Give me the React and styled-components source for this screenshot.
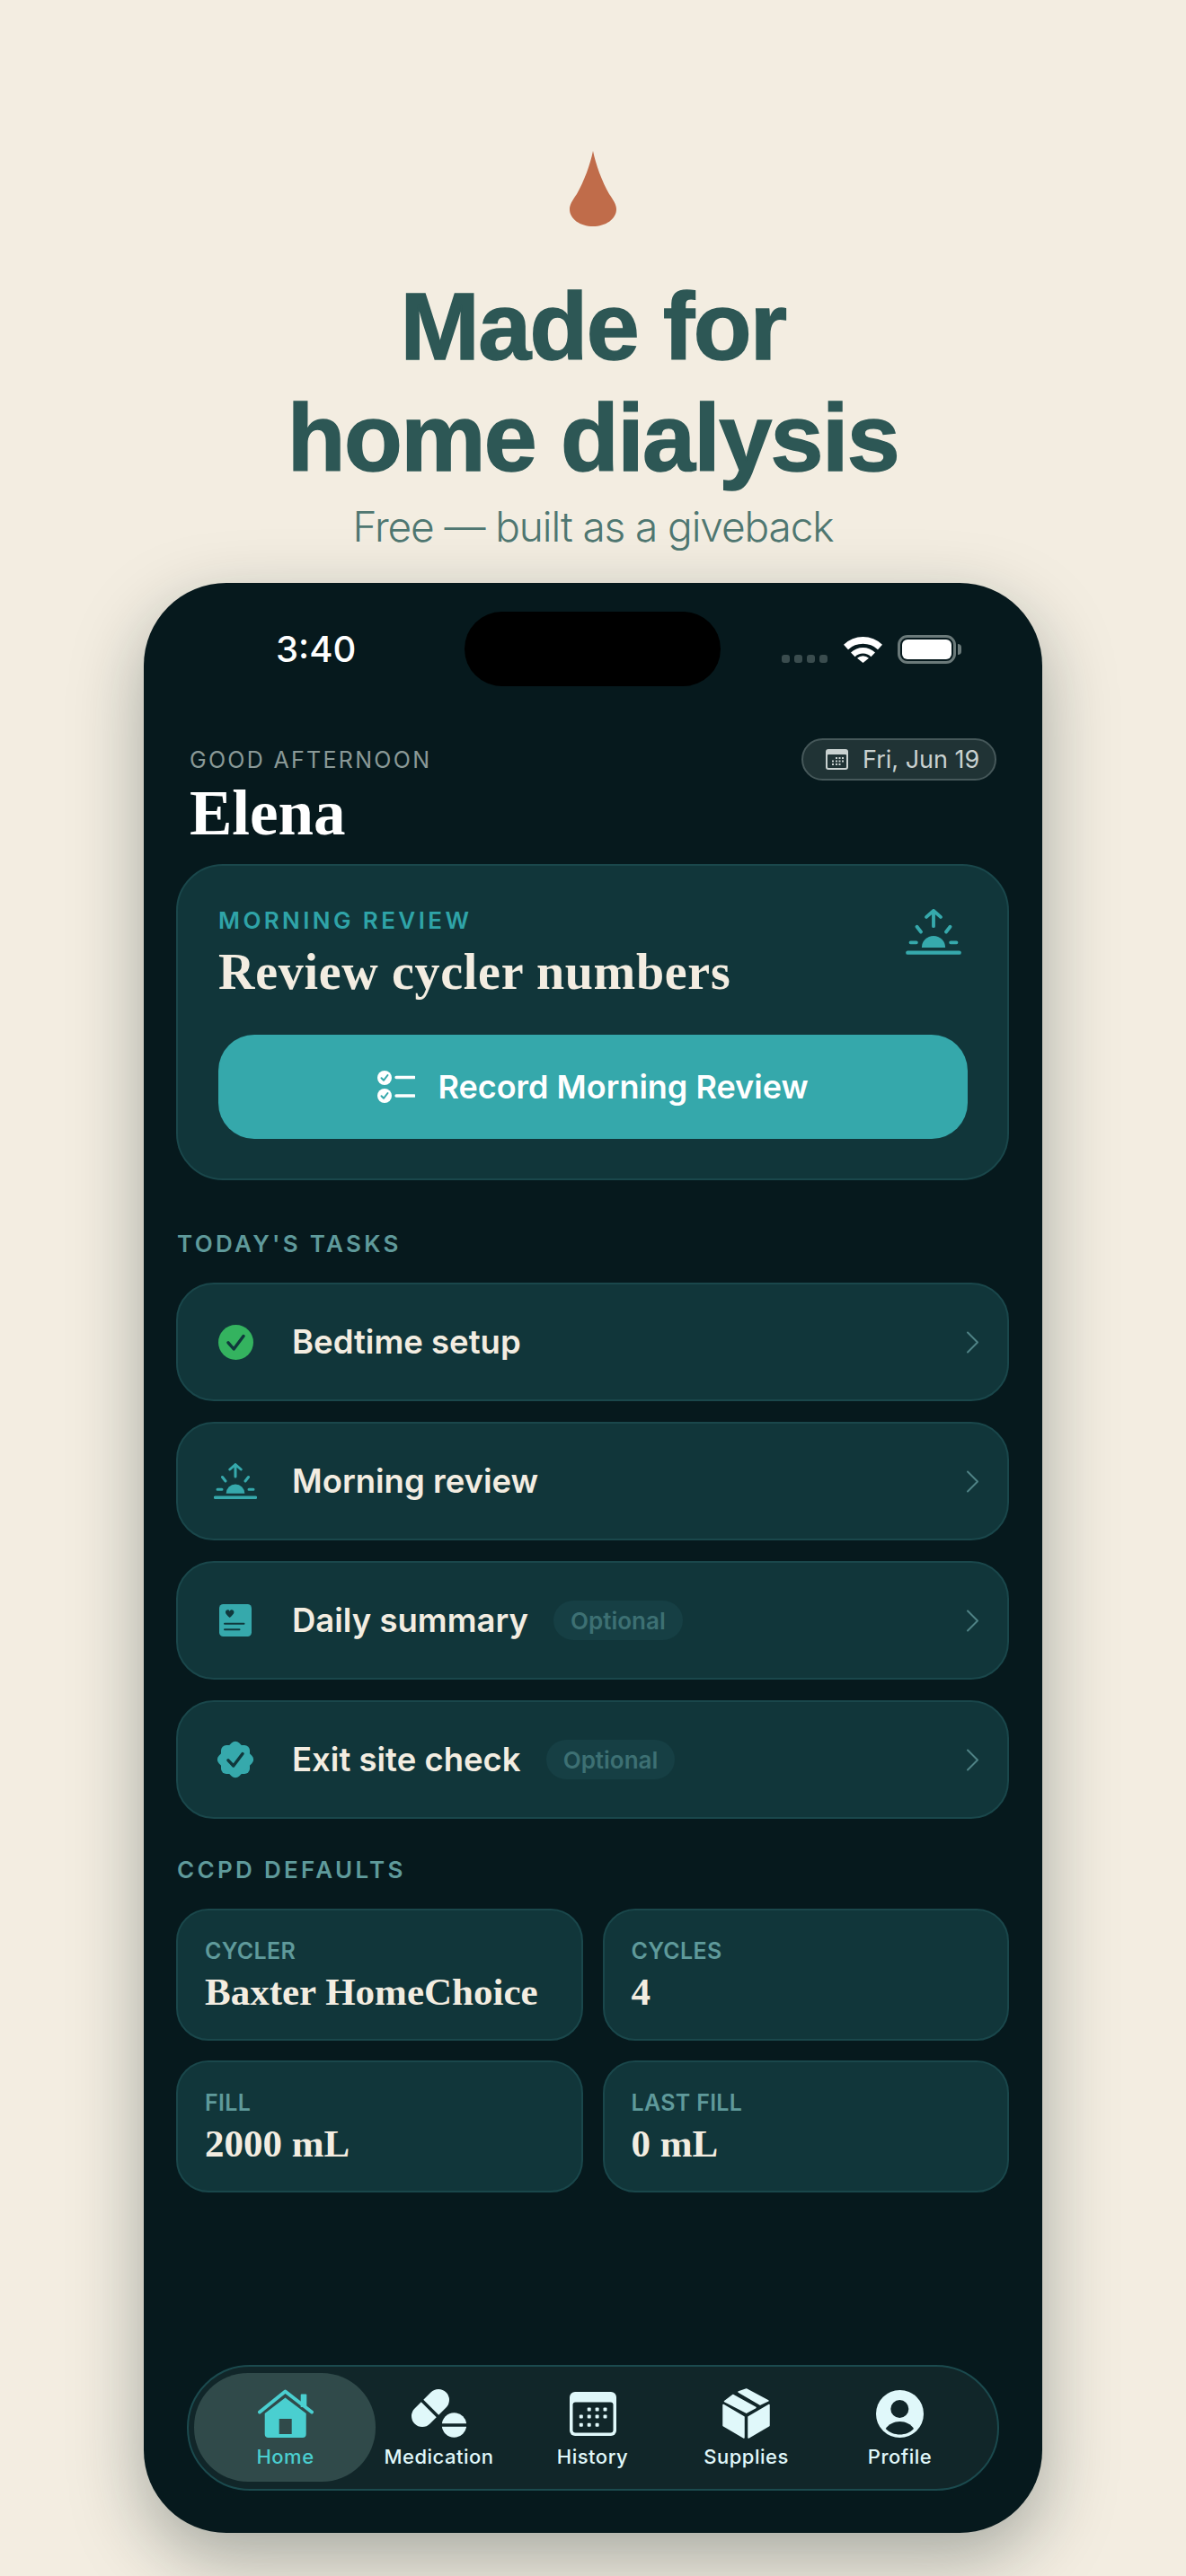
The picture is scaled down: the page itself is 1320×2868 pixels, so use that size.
import React from 'react';
import styled, { createGlobalStyle } from 'styled-components';

const GlobalStyle = createGlobalStyle`
  * { box-sizing: border-box; }
  html, body { margin: 0; padding: 0; background: #f3ede1; }
  body { font-family: Inter, "Liberation Sans", sans-serif; }
`;

const serif = `"Liberation Serif", "Times New Roman", serif`;

const Page = styled.div`
  width: 1320px;
  height: 2868px;
  overflow: hidden;
  display: flex;
  flex-direction: column;
  align-items: center;
  padding-top: 168px;
  background: #f3ede1;
`;

const Hero = styled.header`
  display: flex;
  flex-direction: column;
  align-items: center;
  text-align: center;
`;

const Headline = styled.h1`
  margin: 49px 0 0;
  font-family: "Liberation Sans", Arial, sans-serif;
  font-size: 106px;
  line-height: 124px;
  font-weight: 700;
  letter-spacing: -1.6px;
  -webkit-text-stroke: 1.5px #2d5755;
  color: #2d5755;
`;

const Subtitle = styled.p`
  margin: 6px 0 0;
  font-size: 46px;
  line-height: 62px;
  font-weight: 300;
  letter-spacing: -1.1px;
  color: #4f7771;
`;

const Phone = styled.main`
  width: 1000px;
  height: 2171px;
  margin-top: 32px;
  display: flex;
  flex-direction: column;
  flex-shrink: 0;
  border-radius: 92px;
  background: #06191d;
  box-shadow: 0 28px 80px rgba(16, 36, 34, 0.34);
`;

const StatusBar = styled.div`
  display: grid;
  grid-template-columns: 210px 285px 1fr;
  align-items: center;
  height: 83px;
  margin-top: 32px;
  padding-left: 147px;
`;

const Clock = styled.span`
  font-size: 40px;
  font-weight: 500;
  color: #fff;
`;

const Island = styled.div`
  height: 83px;
  border-radius: 42px;
  background: #000;
`;

const StatusIcons = styled.div`
  display: flex;
  align-items: center;
  padding-left: 68px;
`;

const SignalDots = styled.div`
  display: flex;
  gap: 5px;
  margin: 22px 18px 0 0;
`;

const SignalDot = styled.i`
  width: 9px;
  height: 9px;
  border-radius: 3px;
  background: #3a4c4e;
`;

const Battery = styled.div`
  position: relative;
  width: 65px;
  height: 32px;
  margin-left: 17px;
  padding: 2px;
  border: 3px solid #6b7a7a;
  border-radius: 11px;
  &::after {
    content: '';
    position: absolute;
    right: -9px;
    top: 7px;
    width: 4px;
    height: 12px;
    border-radius: 0 4px 4px 0;
    background: #6b7a7a;
  }
`;

const BatteryFill = styled.div`
  height: 100%;
  border-radius: 6px;
  background: #fff;
`;

const Header = styled.div`
  margin-top: 58px;
  padding: 0 51px;
`;

const GreetingRow = styled.div`
  display: flex;
  align-items: center;
  justify-content: space-between;
`;

const Greeting = styled.span`
  font-size: 25px;
  letter-spacing: 2.3px;
  color: #8a9997;
`;

const DatePill = styled.div`
  width: 217px;
  height: 47px;
  display: flex;
  align-items: center;
  gap: 16px;
  padding-left: 25px;
  border: 2px solid #46585a;
  border-radius: 24px;
  background: #203335;
  font-size: 27px;
  color: #c9d1d0;
`;

const Name = styled.h2`
  margin: -5px 0 5px;
  font-family: ${serif};
  font-size: 71px;
  line-height: 82px;
  font-weight: 700;
  color: #fff;
`;

const Content = styled.div`
  padding: 11px 37px 0 36px;
`;

const Card = styled.section`
  border: 2px solid #1a474b;
  background: #11363a;
`;

const ReviewCard = styled(Card)`
  height: 352px;
  padding: 46px 45px 0;
  border-radius: 52px;
`;

const ReviewTop = styled.div`
  display: flex;
  justify-content: space-between;
`;

const ReviewLabel = styled.div`
  font-size: 26px;
  line-height: 30px;
  font-weight: 600;
  letter-spacing: 3.4px;
  color: #2fa4a8;
`;

const ReviewTitle = styled.h3`
  margin: 11px 0 0;
  font-family: ${serif};
  font-size: 56px;
  line-height: 62px;
  font-weight: 700;
  letter-spacing: 0.7px;
  color: #f3ede1;
`;

const SunriseSlot = styled.div`
  margin: 2px 6px 0 0;
  line-height: 0;
`;

const RecordButton = styled.button`
  width: 834px;
  height: 116px;
  margin-top: 39px;
  display: flex;
  align-items: center;
  justify-content: center;
  gap: 25px;
  border: 0;
  border-radius: 40px;
  background: #35a8ab;
  font-family: inherit;
  font-size: 36px;
  font-weight: 600;
  color: #fff;
`;

const SectionTitle = styled.h4`
  margin: ${(p) => p.$top}px 0 27px 1px;
  font-size: 26px;
  line-height: 32px;
  font-weight: 600;
  letter-spacing: 3.3px;
  color: #5f9a9b;
`;

const TaskList = styled.div`
  display: flex;
  flex-direction: column;
  gap: 23px;
`;

const TaskRow = styled(Card)`
  height: 132px;
  display: flex;
  align-items: center;
  padding: 0 31px 0 40px;
  border-radius: 42px;
`;

const TaskIcon = styled.div`
  width: 48px;
  margin-right: 39px;
  display: flex;
  justify-content: center;
  line-height: 0;
`;

const TaskName = styled.span`
  font-size: 36.5px;
  font-weight: 600;
  color: #f3ede1;
`;

const OptionalBadge = styled.span`
  height: 44px;
  display: flex;
  align-items: center;
  margin-left: 28px;
  padding: 0 19px;
  border-radius: 22px;
  background: #163f44;
  font-size: 26px;
  font-weight: 600;
  color: #3d7073;
`;

const Chevron = styled.svg`
  margin-left: auto;
`;

const DefaultsGrid = styled.div`
  display: grid;
  grid-template-columns: 1fr 1fr;
  gap: 22px;
`;

const DefaultCard = styled(Card)`
  height: 147px;
  padding: 29px 30px 0;
  border-radius: 36px;
`;

const DefaultLabel = styled.div`
  font-size: 25px;
  line-height: 32px;
  font-weight: 600;
  letter-spacing: 0.3px;
  color: #5f9a9b;
`;

const DefaultValue = styled.div`
  margin-top: 5px;
  font-family: ${serif};
  font-size: 43px;
  line-height: 50px;
  font-weight: 700;
  color: #f3ede1;
`;

const NavBar = styled.nav`
  width: 904px;
  height: 140px;
  margin: auto 0 47px 48px;
  display: grid;
  grid-template-columns: repeat(5, 171px);
  padding-left: 22px;
  border: 2px solid #1b4a4e;
  border-radius: 70px;
  background: #112629;
`;

const NavItem = styled.div`
  position: relative;
  display: flex;
  flex-direction: column;
  align-items: center;
  padding-top: 24px;
  font-size: 22px;
  font-weight: 500;
  letter-spacing: 0.5px;
  color: ${(p) => (p.$active ? '#4acfd0' : '#e0f8fa')};
  &::before {
    content: ${(p) => (p.$active ? "''" : 'none')};
    position: absolute;
    left: -16px;
    top: 7px;
    width: 202px;
    height: 121px;
    border-radius: 60px;
    background: #304a4a;
  }
`;

const NavIconSlot = styled.div`
  position: relative;
  height: 56px;
  display: flex;
  align-items: center;
  justify-content: center;
`;

const NavLabel = styled.span`
  position: relative;
  margin-top: 4px;
  line-height: 32px;
`;

const TEAL = '#36a9ac';
const DARK = '#10383c';
const ICE = '#e0f8fa';

const Drop = () => (
  <svg width="52" height="84" viewBox="0 0 52 84">
    <path
      d="M26 0 C29 15 36 34 44 48 C49 55 52 60 52 65 C52 76 40 84 26 84 C12 84 0 76 0 65 C0 60 3 55 8 48 C16 34 23 15 26 0Z"
      fill="#c06c4a"
    />
  </svg>
);

const Wifi = () => (
  <svg width="43" height="31" viewBox="0 0 43 31" fill="#fff">
    <path d="M0 10.7 A31 31 0 0 1 43 10.7 L38 16.2 A24 24 0 0 0 5 16.2Z" />
    <path d="M8 19.6 A19 19 0 0 1 35 19.6 L30.4 24.2 A12.5 12.5 0 0 0 12.6 24.2Z" />
    <path d="M15 25.8 A9.5 9.5 0 0 1 28 25.8 L21.5 31Z" />
  </svg>
);

const CalendarSmall = () => (
  <svg width="25" height="23" viewBox="0 0 25 23">
    <rect width="25" height="23" rx="3" fill="#c9d1d0" />
    <rect x="2" y="6" width="21" height="15" rx="1" fill="#203335" />
    {[[11, 9], [14.5, 9], [18, 9], [7, 12.5], [11, 12.5], [14.5, 12.5], [18, 12.5], [7, 16], [11, 16], [14.5, 16]].map(([x, y]) => (
      <rect key={`${x}-${y}`} x={x} y={y} width="2" height="2" fill="#c9d1d0" />
    ))}
  </svg>
);

const Sunrise = ({ width = 48, height = 40 }) => (
  <svg width={width} height={height} viewBox="0 0 48 40" fill="none" stroke={TEAL} strokeWidth="3" strokeLinecap="round">
    <path d="M24 15V2M17.8 7 24 1.5 30.2 7" strokeLinejoin="round" />
    <path d="M9.5 15.5 13 20M38.5 15.5 35 20M4 29.3H9M39 29.3H44" />
    <path d="M13.7 33.8A10.3 10.3 0 0 1 34.3 33.8Z" fill={TEAL} stroke="none" />
    <path d="M1.5 38.2H46.5" strokeWidth="3.4" />
  </svg>
);

const Checklist = () => (
  <svg width="42" height="36" viewBox="0 0 42 36">
    <circle cx="8" cy="8" r="8" fill="#fff" />
    <circle cx="8" cy="28" r="8" fill="#fff" />
    <path d="M4.5 8.2 7 10.8 11.5 5M4.5 28.2 7 30.8 11.5 25" fill="none" stroke={TEAL} strokeWidth="2" strokeLinecap="round" strokeLinejoin="round" />
    <path d="M21 7.5H41M21 28H41" stroke="#fff" strokeWidth="3.4" strokeLinecap="round" />
  </svg>
);

const DoneCheck = () => (
  <svg width="39" height="39" viewBox="0 0 39 39">
    <circle cx="19.5" cy="19.5" r="19.5" fill="#34b35f" />
    <path d="M11 19.8 17.2 27 28 12.5" fill="none" stroke={DARK} strokeWidth="3.4" strokeLinecap="round" strokeLinejoin="round" />
  </svg>
);

const SummaryIcon = () => (
  <svg width="36" height="36" viewBox="0 0 36 36">
    <rect width="36" height="36" rx="4.5" fill={TEAL} />
    <path d="M11.7 15 C8 12 7 10.5 7 8.8 C7 6.2 10.4 5.4 11.7 7.8 C13 5.4 16.4 6.2 16.4 8.8 C16.4 10.5 15.4 12 11.7 15Z" fill={DARK} />
    <path d="M6 21.7H27.5M6 28.3H22.5" stroke={DARK} strokeWidth="2" strokeLinecap="round" />
  </svg>
);

const ExitBadge = () => (
  <svg width="44" height="44" viewBox="0 0 44 44">
    <rect x="6" y="6" width="32" height="32" rx="6" fill={TEAL} />
    <rect x="6" y="6" width="32" height="32" rx="6" fill={TEAL} transform="rotate(45 22 22)" />
    <path d="M14 22.8 19.8 29 30 15.5" fill="none" stroke={DARK} strokeWidth="3.4" strokeLinecap="round" strokeLinejoin="round" />
  </svg>
);

const ChevronRight = () => (
  <Chevron width="15" height="25" viewBox="0 0 15 25" fill="none" stroke="#4f8285" strokeWidth="2" strokeLinecap="round" strokeLinejoin="round">
    <path d="M2 1.5 13 12.5 2 23.5" />
  </Chevron>
);

const HomeIcon = () => (
  <svg width="62" height="54" viewBox="0 0 62 54">
    <path d="M47.7 6.5 A1 1 0 0 1 48.7 5.5H53.3A1 1 0 0 1 54.3 6.5V20H47.7Z" fill="#4acfd0" />
    <path d="M2 25.5 30.5 2.5 60 25.5" fill="none" stroke="#4acfd0" strokeWidth="4" strokeLinecap="round" strokeLinejoin="round" />
    <path
      fillRule="evenodd"
      d="M7.7 27 30.5 9.5 53.7 27V50A4 4 0 0 1 49.7 54H11.7A4 4 0 0 1 7.7 50ZM23.7 33V50H37.7V33Z"
      fill="#4acfd0"
    />
  </svg>
);

const MedicationIcon = () => (
  <svg width="61" height="54" viewBox="0 0 61 54">
    <path d="M12 30 30 12" stroke={ICE} strokeWidth="24" strokeLinecap="round" />
    <path d="M11 12 32 33" stroke="#112629" strokeWidth="3.5" />
    <circle cx="47.5" cy="40" r="13.7" fill={ICE} />
    <path d="M32 40H62" stroke="#112629" strokeWidth="3.5" />
  </svg>
);

const HistoryIcon = () => (
  <svg width="52" height="49" viewBox="0 0 52 49">
    <rect width="52" height="49" rx="6" fill={ICE} />
    <rect x="3.5" y="11.5" width="45" height="34" rx="3" fill="#112629" />
    {[[30.6, 19.4], [39.5, 19.4], [21.7, 19.4], [12.8, 27.6], [21.7, 27.6], [30.6, 27.6], [39.5, 27.6], [12.8, 36.7], [21.7, 36.7], [30.6, 36.7]].map(([x, y]) => (
      <rect key={`${x}-${y}`} x={x - 2} y={y - 2} width="4" height="4" rx="1" fill={ICE} />
    ))}
  </svg>
);

const SuppliesIcon = () => (
  <svg width="53" height="56" viewBox="0 0 53 56" fill={ICE} stroke={ICE} strokeWidth="1.5" strokeLinejoin="round">
    <path d="M1 18.5 24 32V55L1 41.5Z" />
    <path d="M52 18.5 29 32V55L52 41.5Z" />
    <path d="M2.5 14.5 11.7 7.5 37 21.5 26.7 27.2Z" />
    <path d="M18 4 26.7 1 51 13.8 42 18.2Z" />
  </svg>
);

const ProfileIcon = () => (
  <svg width="53" height="53" viewBox="0 0 53 53">
    <circle cx="26.5" cy="26.5" r="26.5" fill={ICE} />
    <circle cx="26.3" cy="21" r="10" fill="#112629" />
    <path d="M10.7 43C14 38 20 35 26.5 35C33 35 39 38 42 43C38 47.5 32 49.5 26.5 49.5C21 49.5 15 47.5 10.7 43Z" fill="#112629" />
  </svg>
);

const tasks = [
  { name: 'Bedtime setup', icon: <DoneCheck /> },
  { name: 'Morning review', icon: <Sunrise /> },
  { name: 'Daily summary', icon: <SummaryIcon />, optional: true },
  { name: 'Exit site check', icon: <ExitBadge />, optional: true },
];

const defaults = [
  { label: 'CYCLER', value: 'Baxter HomeChoice' },
  { label: 'CYCLES', value: '4' },
  { label: 'FILL', value: '2000 mL' },
  { label: 'LAST FILL', value: '0 mL' },
];

const navItems = [
  { label: 'Home', icon: <HomeIcon />, active: true },
  { label: 'Medication', icon: <MedicationIcon /> },
  { label: 'History', icon: <HistoryIcon /> },
  { label: 'Supplies', icon: <SuppliesIcon /> },
  { label: 'Profile', icon: <ProfileIcon /> },
];

export default function App() {
  return (
    <Page>
      <GlobalStyle />
      <Hero>
        <Drop />
        <Headline>
          Made for
          <br />
          home dialysis
        </Headline>
        <Subtitle>Free — built as a giveback</Subtitle>
      </Hero>
      <Phone>
        <StatusBar>
          <Clock>3:40</Clock>
          <Island />
          <StatusIcons>
            <SignalDots>
              <SignalDot />
              <SignalDot />
              <SignalDot />
              <SignalDot />
            </SignalDots>
            <Wifi />
            <Battery>
              <BatteryFill />
            </Battery>
          </StatusIcons>
        </StatusBar>
        <Header>
          <GreetingRow>
            <Greeting>GOOD AFTERNOON</Greeting>
            <DatePill>
              <CalendarSmall />
              Fri, Jun 19
            </DatePill>
          </GreetingRow>
          <Name>Elena</Name>
        </Header>
        <Content>
          <ReviewCard>
            <ReviewTop>
              <div>
                <ReviewLabel>MORNING REVIEW</ReviewLabel>
                <ReviewTitle>Review cycler numbers</ReviewTitle>
              </div>
              <SunriseSlot>
                <Sunrise width={62} height={51} />
              </SunriseSlot>
            </ReviewTop>
            <RecordButton>
              <Checklist />
              Record Morning Review
            </RecordButton>
          </ReviewCard>
          <SectionTitle $top={55}>TODAY'S TASKS</SectionTitle>
          <TaskList>
            {tasks.map((t) => (
              <TaskRow key={t.name}>
                <TaskIcon>{t.icon}</TaskIcon>
                <TaskName>{t.name}</TaskName>
                {t.optional && <OptionalBadge>Optional</OptionalBadge>}
                <ChevronRight />
              </TaskRow>
            ))}
          </TaskList>
          <SectionTitle $top={41}>CCPD DEFAULTS</SectionTitle>
          <DefaultsGrid>
            {defaults.map((d) => (
              <DefaultCard key={d.label}>
                <DefaultLabel>{d.label}</DefaultLabel>
                <DefaultValue>{d.value}</DefaultValue>
              </DefaultCard>
            ))}
          </DefaultsGrid>
        </Content>
        <NavBar>
          {navItems.map((n) => (
            <NavItem key={n.label} $active={n.active}>
              <NavIconSlot>{n.icon}</NavIconSlot>
              <NavLabel>{n.label}</NavLabel>
            </NavItem>
          ))}
        </NavBar>
      </Phone>
    </Page>
  );
}
